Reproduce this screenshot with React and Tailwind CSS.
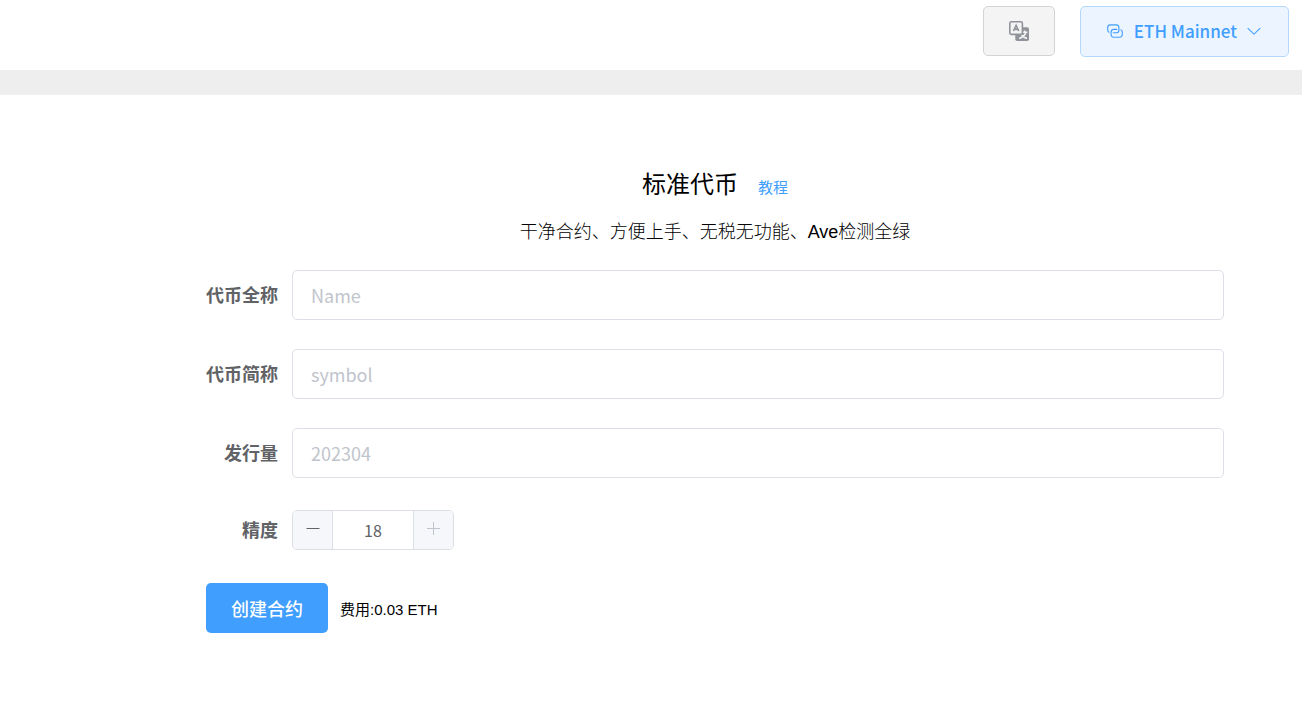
import { useState } from "react";

function TranslateIcon() {
  return (
    <svg viewBox="0 0 20 20" className="size-5" aria-hidden="true">
      <rect x="6.3" y="6.3" width="13.7" height="13.7" rx="1.8" fill="#909399" />
      <path
        d="M15.6 9.4v1.8M13.4 11.3h5M16.8 11.6c-.9 2.8-3 4.9-6.6 5.8M12 13.4c1.4 2 3.2 3.4 6 4"
        fill="none"
        stroke="#f4f4f5"
        strokeWidth="1.6"
      />
      <rect x="0.8" y="0.8" width="12.6" height="12.6" rx="1.6" fill="#f4f4f5" stroke="#909399" strokeWidth="1.6" />
      <path d="M4.4 10 7.1 4.4 9.8 10M5.2 8.4h3.8" fill="none" stroke="#909399" strokeWidth="1.6" />
    </svg>
  );
}

function ConnectionIcon() {
  return (
    <svg viewBox="0 0 1024 1024" className="size-[18px]" fill="currentColor" aria-hidden="true">
      <path d="M640 384v64H448a128 128 0 0 0-128 128v128a128 128 0 0 0 128 128h320a128 128 0 0 0 128-128V576a128 128 0 0 0-64-110.848V394.88c74.56 26.368 128 97.472 128 181.056v128a192 192 0 0 1-192 192H448a192 192 0 0 1-192-192V576a192 192 0 0 1 192-192z" />
      <path d="M384 640v-64h192a128 128 0 0 0 128-128V320a128 128 0 0 0-128-128H256a128 128 0 0 0-128 128v128a128 128 0 0 0 64 110.848v70.272A192.06 192.06 0 0 1 64 448V320a192 192 0 0 1 192-192h320a192 192 0 0 1 192 192v128a192 192 0 0 1-192 192z" />
    </svg>
  );
}

function ArrowDownIcon() {
  return (
    <svg viewBox="0 0 1024 1024" className="size-[18px]" fill="currentColor" aria-hidden="true">
      <path d="M831.872 340.864 512 652.672 192.128 340.864a30.59 30.59 0 0 0-42.752 0 29.12 29.12 0 0 0 0 41.6L489.664 714.24a32 32 0 0 0 44.672 0l340.288-331.712a29.12 29.12 0 0 0 0-41.728 30.59 30.59 0 0 0-42.752 0z" />
    </svg>
  );
}

function Label({ htmlFor, children }) {
  return (
    <label htmlFor={htmlFor} className="w-[72px] shrink-0 pb-0.5 text-right text-lg font-bold whitespace-nowrap text-[#606266]">
      {children}
    </label>
  );
}

function TextField({ id, label, placeholder }) {
  return (
    <div className="flex items-center gap-[14px]">
      <Label htmlFor={id}>{label}</Label>
      <input
        id={id}
        type="text"
        placeholder={placeholder}
        className="h-[50px] min-w-0 flex-1 rounded-[5px] border border-[#dcdfe6] bg-white px-[18px] text-lg text-[#606266] outline-none placeholder:text-[#c0c4cc] focus:border-[#409eff]"
      />
    </div>
  );
}

function DecimalsField() {
  const max = 18;
  const [value, setValue] = useState(18);
  return (
    <div className="flex items-center gap-[14px]">
      <Label htmlFor="decimals">精度</Label>
      <div className="flex h-10 overflow-hidden rounded-[5px] border border-[#dcdfe6]">
        <button
          type="button"
          aria-label="减少"
          onClick={() => setValue(Math.max(0, value - 1))}
          className="flex w-[39px] items-center justify-center bg-[#f5f7fa] pb-1 text-[#606266]"
        >
          <svg viewBox="0 0 14 14" className="size-3.5" aria-hidden="true">
            <path d="M0.5 7.5h13" stroke="currentColor" />
          </svg>
        </button>
        <input
          id="decimals"
          type="text"
          inputMode="numeric"
          value={value}
          onChange={(e) => setValue(Math.min(max, Number(e.target.value) || 0))}
          className="w-[82px] border-x border-[#dcdfe6] bg-white text-center text-base text-[#606266] outline-none"
        />
        <button
          type="button"
          aria-label="增加"
          disabled={value >= max}
          onClick={() => setValue(value + 1)}
          className="flex w-[39px] items-center justify-center bg-[#f5f7fa] pb-1 text-[#606266] disabled:text-[#c0c4cc]"
        >
          <svg viewBox="0 0 14 14" className="size-3.5" aria-hidden="true">
            <path d="M0 7.5h13M6.5 1v13" stroke="currentColor" />
          </svg>
        </button>
      </div>
    </div>
  );
}

export default function App() {
  return (
    <div lang="zh-CN" className="min-h-screen bg-white font-['Noto_Sans_CJK_SC',sans-serif]">
      <header className="flex h-[70px] items-start justify-end gap-[25px] pt-1.5 pr-[13px]">
        <button
          type="button"
          aria-label="切换语言"
          className="flex h-[50px] w-[72px] items-center justify-center rounded-[5px] border border-[#d3d4d6] bg-[#f4f4f5]"
        >
          <TranslateIcon />
        </button>
        <button
          type="button"
          className="flex h-[51px] items-center rounded-[5px] border border-[#b3d8ff] bg-[#ecf5ff] px-[25px] pb-0.5 text-[17px] font-medium text-[#409eff]"
        >
          <ConnectionIcon />
          <span className="mr-2 ml-2.5">ETH Mainnet</span>
          <ArrowDownIcon />
        </button>
      </header>
      <div className="h-[25px] bg-[#eeeeee]" />
      <main className="pt-[70px] pr-[78px] pl-[206px] text-black">
        <div className="flex items-baseline justify-center gap-5">
          <h1 className="text-2xl leading-9">标准代币</h1>
          <a href="#tutorial" className="text-[15px] text-[#409eff]">
            教程
          </a>
        </div>
        <p className="mt-[17px] text-center font-['Liberation_Sans','Noto_Sans_CJK_SC',sans-serif] text-lg font-light">
          干净合约、方便上手、无税无功能、Ave检测全绿
        </p>
        <form className="mt-6" onSubmit={(e) => e.preventDefault()}>
          <div className="flex flex-col gap-[29px]">
            <TextField id="name" label="代币全称" placeholder="Name" />
            <TextField id="symbol" label="代币简称" placeholder="symbol" />
            <TextField id="supply" label="发行量" placeholder="202304" />
          </div>
          <div className="mt-8 mb-[33px]">
            <DecimalsField />
          </div>
          <div className="flex items-center gap-3">
            <button
              type="submit"
              className="h-[50px] rounded-[5px] bg-[#409eff] px-[25px] text-lg font-medium text-white"
            >
              创建合约
            </button>
            <span className="pt-1 font-['Liberation_Sans','Noto_Sans_CJK_SC',sans-serif] text-[15px]">费用:0.03 ETH</span>
          </div>
        </form>
      </main>
    </div>
  );
}
